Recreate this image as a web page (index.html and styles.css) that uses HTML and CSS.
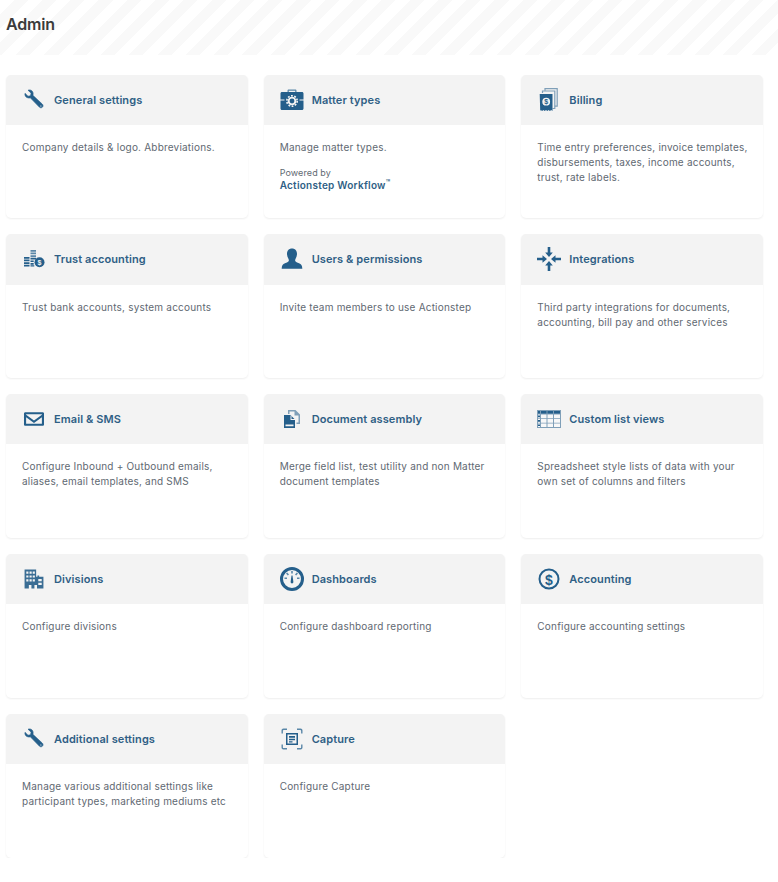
FILE: index.html
```html
<!DOCTYPE html>
<html>
<head>
    <title>Admin</title>
    <meta charset="utf-8" />
    <link rel="stylesheet" href="styles.css">
</head>
<body>
    <div class="page-header">
        <h1>Admin</h1>
    </div>

    <div class="card-grid">
        <div class="card">
            <div class="card-head">
                <svg class="icon wrench" viewBox="-2 -2 28 28"><path fill-rule="evenodd" d="M1.500 4.200 5 7.600l2.900-.6.700-3L5 .6C8-.6 11.300 1.500 11 5c0 .6-.1 1.100-.3 1.600l10.800 10c1.200 1.100 1.400 2.500.5 3.600-1 1.200-2.600 1.200-3.800.1L7.700 9.500c-.7.200-1.300.3-2 .2C2.700 9.400.8 7 1.500 4.200ZM20 18a1 1 0 1 0 0 2 1 1 0 0 0 0-2Z"/></svg>
                <span>General settings</span>
            </div>
            <p>Company details &amp; logo. Abbreviations.</p>
        </div>
        <div class="card">
            <div class="card-head">
                <svg class="icon" viewBox="0 0 24 24"><path class="mid" d="M7.500 4.500V2.800c0-.8.500-1.300 1.300-1.300h6.400c.8 0 1.300.5 1.300 1.300v1.700h-1.300V2.800H8.800v1.700Z"/><path d="M2 4h20c.9 0 1.500.6 1.500 1.500v6H19.500v1h4v8c0 .9-.6 1.500-1.500 1.500H2c-.9 0-1.500-.6-1.500-1.500v-8h4v-1H.5v-6C.5 4.600 1.100 4 2 4Z"/><circle class="cut" cx="12" cy="13" r="4.300"/><circle class="gear-teeth" cx="12" cy="13" r="5.200"/><circle cx="12" cy="13" r="2.400"/></svg>
                <span>Matter types</span>
            </div>
            <p>Manage matter types.</p>
            <div class="powered">
                Powered by
                <strong>Actionstep Workflow<sup>™</sup></strong>
            </div>
        </div>
        <div class="card">
            <div class="card-head">
                <svg class="icon" viewBox="0 0 24 24"><path class="line-pale" d="M8 2.800V.6h12.200v17.600h-2.400"/><path class="line-pale" d="M5.500 5V3h12.300v17.500h-2.300"/><path fill-rule="evenodd" d="M2.700 6h12.800v17l-1.300-1-1.300 1-1.300-1-1.300 1-1.300-1-1.300 1-1.300-1-1.300 1-1.300-1-.6 1ZM9.200 9.800a3.900 3.900 0 1 0 0 7.800 3.900 3.900 0 0 0 0-7.800Z"/><text x="9.200" y="16.100" class="glyph tiny">$</text></svg>
                <span>Billing</span>
            </div>
            <p>Time entry preferences, invoice templates, disbursements, taxes, income accounts, trust, rate labels.</p>
        </div>

        <div class="card">
            <div class="card-head">
                <svg class="icon" viewBox="0 0 24 24"><path class="mid" d="M8.500 3h5.500v1.700H8.500Zm0 2.600h5.500v1.700H8.500Zm0 2.600h5.500v1.700H8.500Z"/><path d="M2 10h5.500v1.700H2Zm0 2.600h5.500v1.700H2Zm0 2.600h5.500v1.700H2Zm0 2.600h5.500v1.700H2ZM8.500 10.800H14v1.700H8.500Zm0 2.600h3.200v1.700H8.500Zm0 2.600h3.200v1.700H8.500Zm0 2.300h3.800v1.200H8.500Z"/><circle cx="17.500" cy="15.200" r="5"/><text x="17.500" y="17.800" class="glyph small">$</text></svg>
                <span>Trust accounting</span>
            </div>
            <p>Trust bank accounts, system accounts</p>
        </div>
        <div class="card">
            <div class="card-head">
                <svg class="icon" viewBox="-1 -1 26 26"><path d="M12 .5c3.600 0 5.600 2.600 5.400 6.300-.1 1.700-.6 3.300-1.400 4.600-.6 1-.8 2-.4 2.900.5 1 2 1.600 4 2.300 2.400.9 3.400 2.400 3.600 5.900H.8c.2-3.500 1.200-5 3.600-5.900 2-.7 3.500-1.300 4-2.300.4-.9.200-1.900-.4-2.900-.8-1.300-1.300-2.900-1.400-4.600C6.400 3.100 8.400.5 12 .5Z"/></svg>
                <span>Users &amp; permissions</span>
            </div>
            <p>Invite team members to use Actionstep</p>
        </div>
        <div class="card">
            <div class="card-head">
                <svg class="icon" viewBox="0 0 24 24"><path d="M10.700 0h2.600v5.500h2.500L12 10 8.200 5.500h2.500ZM10.700 24v-5.500H8.200L12 14l3.800 4.500h-2.500V24Z"/><path d="M0 10.700h5.500V8.200L10 12l-4.500 3.800v-2.500H0ZM24 10.700h-5.500V8.200L14 12l4.500 3.800v-2.500H24Z"/></svg>
                <span>Integrations</span>
            </div>
            <p>Third party integrations for documents, accounting, bill pay and other services</p>
        </div>

        <div class="card">
            <div class="card-head">
                <svg class="icon" viewBox="-2 -2 28 28"><path fill-rule="evenodd" d="M2 4h20c1 0 1.700.7 1.700 1.700v12.600c0 1-.7 1.700-1.700 1.700H2c-1 0-1.700-.7-1.700-1.700V5.700C.3 4.700 1 4 2 4Zm.8 2.500v.4l9.200 6.900 9.200-6.900v-.4Zm0 3.400v7.600h18.400V9.900L12 16.800Z"/></svg>
                <span>Email &amp; SMS</span>
            </div>
            <p>Configure Inbound + Outbound emails, aliases, email templates, and SMS</p>
        </div>
        <div class="card">
            <div class="card-head">
                <svg class="icon" viewBox="0 0 24 24"><path class="pale" d="M8 3h7.500l4.500 4.500V17h-3.500v-1.500h2v-7h-4v-4H9.500V7H8Z"/><path fill-rule="evenodd" d="M4 8h6.500l4.500 4.500V21H4ZM5.500 17.500v1.800h8v-1.800Z"/><path class="cut" d="M10.500 8.500v4.500h4.500v-1h-3.500V8.500Z"/></svg>
                <span>Document assembly</span>
            </div>
            <p>Merge field list, test utility and non Matter document templates</p>
        </div>
        <div class="card">
            <div class="card-head">
                <svg class="icon tall" viewBox="0 0 24 18"><path class="pale" d="M0 0h24v18H0Z"/><path class="lit" d="M4 4.500h5.500v3.700H4Zm6.500 0h5.500v3.700h-5.500Zm6.500 0h6v3.700h-6ZM4 9h5.500v3.700H4Zm6.500 0h5.500v3.700h-5.500Zm6.500 0h6v3.700h-6ZM4 13.500h5.500V17H4Zm6.500 0h5.500V17h-5.500Zm6.500 0h6V17h-6ZM1 4.500h2v3.700H1ZM1 9h2v3.700H1ZM1 13.500h2V17H1Z"/><path d="M1 1h2v2.500H1Zm3 0h5.500v2.500H4Zm6.500 0h5.500v2.500h-5.500Zm6.500 0h6v2.500h-6ZM1 5.500h2v1.700H1Zm0 4.500h2v1.700H1Zm0 4.500h2v1.500H1Z"/></svg>
                <span>Custom list views</span>
            </div>
            <p>Spreadsheet style lists of data with your own set of columns and filters</p>
        </div>

        <div class="card">
            <div class="card-head">
                <svg class="icon buildings" viewBox="-2 -2 28 28"><path fill-rule="evenodd" d="M1 1h13.500v8.500h1.500V8h2v1.500h5V23h-7.500v-4h-3v4H9v-4H6v4H1ZM3 3.300v2.500h2.500V3.300Zm3.800 0v2.500h2.500V3.300Zm3.700 0v2.500H13V3.300ZM3 7.800v2.500h2.500V7.800Zm3.800 0v2.500h2.500V7.800Zm3.700 0v2.500H13V7.800ZM3 12.300v2.500h2.500v-2.500Zm3.800 0v2.500h2.500v-2.500Zm3.700 0v2.500H13v-2.500Zm6.500-.3v2.500h4V12Zm0 4.500V19h4v-2.500Z"/></svg>
                <span>Divisions</span>
            </div>
            <p>Configure divisions</p>
        </div>
        <div class="card">
            <div class="card-head">
                <svg class="icon" viewBox="0 0 24 24"><path fill-rule="evenodd" d="M12 0a12 12 0 1 1 0 24 12 12 0 0 1 0-24Zm0 3a9 9 0 1 0 0 18 9 9 0 0 0 0-18Z"/><path class="mid" d="M11.200 4h1.600v2.500h-1.600ZM6 6.600l1.200-1.100 1.800 2-1.200 1.100ZM18 6.600l-1.200-1.100-1.800 2 1.200 1.100ZM4.500 12v-1.600h2.500V12ZM19.500 12v-1.600H17V12Z"/><path d="M11.500 8.500h1l.9 6.500a1.400 1.400 0 1 1-2.800 0Z"/></svg>
                <span>Dashboards</span>
            </div>
            <p>Configure dashboard reporting</p>
        </div>
        <div class="card">
            <div class="card-head">
                <svg class="icon" viewBox="0 0 24 24"><path fill-rule="evenodd" d="M12 1.500a10.500 10.500 0 1 1 0 21 10.500 10.500 0 0 1 0-21Zm0 2a8.500 8.500 0 1 0 0 17 8.500 8.500 0 0 0 0-17Z"/><text x="12" y="17.500" class="glyph dark">$</text></svg>
                <span>Accounting</span>
            </div>
            <p>Configure accounting settings</p>
        </div>

        <div class="card">
            <div class="card-head">
                <svg class="icon wrench" viewBox="-2 -2 28 28"><path fill-rule="evenodd" d="M1.500 4.200 5 7.600l2.900-.6.700-3L5 .6C8-.6 11.300 1.500 11 5c0 .6-.1 1.100-.3 1.600l10.800 10c1.200 1.100 1.400 2.500.5 3.600-1 1.200-2.600 1.200-3.800.1L7.700 9.500c-.7.200-1.300.3-2 .2C2.700 9.400.8 7 1.500 4.200ZM20 18a1 1 0 1 0 0 2 1 1 0 0 0 0-2Z"/></svg>
                <span>Additional settings</span>
            </div>
            <p>Manage various additional settings like participant types, marketing mediums etc</p>
        </div>
        <div class="card">
            <div class="card-head">
                <svg class="icon" viewBox="0 0 24 24"><path class="mid" d="M1.500 6.500V3.500c0-1.200.8-2 2-2H7v1.400H3.800c-.6 0-.9.300-.9.900v2.700ZM17 1.500h3.500c1.200 0 2 .8 2 2v3h-1.400V3.800c0-.6-.3-.9-.9-.9H17ZM1.500 17.500v3c0 1.200.8 2 2 2H7v-1.400H3.800c-.6 0-.9-.3-.9-.9v-2.700ZM17 22.500h3.500c1.200 0 2-.8 2-2v-3h-1.400v2.700c0 .6-.3.900-.9.900H17Z"/><path fill-rule="evenodd" d="M6 6h12v12H6Zm1.500 1.500v9h9v-9ZM9 9h6v1.700H9Zm0 2.800h6v1.400H9Zm0 2.400h3.500v1.300H9Z"/></svg>
                <span>Capture</span>
            </div>
            <p>Configure Capture</p>
        </div>
    </div>
</body>
</html>
```

FILE: styles.css
```css
html, body {
    margin: 0;
    padding: 0;
    background-color: #fff;
    font-family: Inter, "Noto Sans", sans-serif;
}

/* striped band behind the title */
.page-header {
    height: 55px;
    padding: 0 6px;
    box-sizing: border-box;
    background: repeating-linear-gradient(135deg, #fff, #fff 10px, #f9f9f9 10px, #f9f9f9 20px);
}
.page-header h1 {
    margin: 0;
    padding-top: 14px;
    font-size: 16px;
    line-height: 20px;
    font-weight: 600;
    letter-spacing: -0.2px;
    color: #3b3b3b;
}

.card-grid {
    display: grid;
    grid-template-columns: repeat(3, 1fr);
    grid-auto-rows: 143.8px;
    gap: 16px;
    width: 757px;
    margin: 19.6px 0 0 6px;
}

.card {
    background-color: #fff;
    border-radius: 5px;
    box-shadow: 0 1px 2px rgba(0,0,0,0.07);
    overflow: hidden;
}

.card-head {
    display: flex;
    align-items: center;
    gap: 8px;
    height: 50.2px;
    padding-left: 16px;
    background-color: #f3f3f3;
    font-size: 11px;
    line-height: 14.2px;
    font-weight: 600;
    letter-spacing: 0.1px;
    color: #2f5f85;
}

.icon {
    width: 24px;
    height: 24px;
    flex: none;
    fill: #255f8b;
}
.icon.tall { height: 18px; }
.icon.wrench path {
    stroke: #255f8b;
    stroke-width: 0.7;
}
.icon.buildings { fill: #3a6d94; }
.icon .pale { fill: #7f9fb8; }
.icon .mid { fill: #5a87a8; }
.icon .cut { fill: #f3f3f3; }
.icon .lit { fill: #f8f8f8; }
.icon .line-pale {
    fill: none;
    stroke: #7f9fb8;
    stroke-width: 1.2;
}
.icon .gear-teeth {
    fill: none;
    stroke: #f3f3f3;
    stroke-width: 1.6;
    stroke-dasharray: 1.8 1.47;
}

/* dollar signs inside the icons */
.glyph {
    font-family: "Liberation Sans", sans-serif;
    font-size: 9px;
    font-weight: bold;
    text-anchor: middle;
    fill: #f3f3f3;
}
.glyph.tiny { fill: #255f8b; font-size: 7px; }
.glyph.small { font-size: 7px; }
.glyph.dark { font-size: 14px; fill: #255f8b; }

.card p {
    margin: 0;
    padding: 15px 10px 0 16px;
    font-size: 10px;
    line-height: 15px;
    letter-spacing: 0.2px;
    color: #5f6972;
}

.powered {
    margin: 12px 16px 0;
    font-size: 9px;
    line-height: 12.5px;
    letter-spacing: 0.1px;
    color: #5f6972;
}
.powered strong {
    display: block;
    font-size: 10px;
    font-weight: 600;
    letter-spacing: 0.25px;
    color: #2f5f85;
}
.powered sup {
    font-size: 7px;
    line-height: 0;
}
```
